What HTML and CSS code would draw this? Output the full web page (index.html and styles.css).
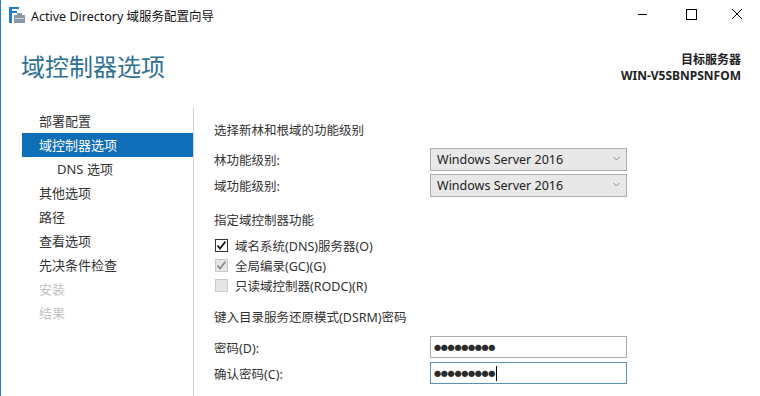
FILE: index.html
```html
<!DOCTYPE html>
<html lang="zh-CN">
<head>
  <meta charset="UTF-8" />
  <title>Active Directory 域服务配置向导</title>
  <link rel="stylesheet" href="styles.css">
</head>
<body>
  <div class="window">
    <div class="titlebar">
      <svg class="app-icon" width="16" height="16" viewBox="0 0 16 16">
        <rect x="0" y="0" width="3" height="16" fill="#1f7fc4"/>
        <rect x="3" y="0" width="7" height="2" fill="#1f7fc4"/>
        <rect x="3" y="4" width="5" height="2" fill="#1f7fc4"/>
        <rect x="5" y="8" width="11" height="8" fill="#8a98a6"/>
        <rect x="8" y="6" width="5" height="2" fill="#8a98a6"/>
        <rect x="6" y="11" width="9" height="1" fill="#c9d2da"/>
      </svg>
      <div class="title">Active Directory 域服务配置向导</div>
      <div class="controls">
        <svg width="46" height="30" viewBox="0 0 46 30"><line x1="16" y1="14.5" x2="25" y2="14.5" stroke="#000" stroke-width="1"/></svg>
        <svg width="46" height="30" viewBox="0 0 46 30"><rect x="18.5" y="9.5" width="10" height="10" fill="none" stroke="#000" stroke-width="1"/></svg>
        <svg width="46" height="30" viewBox="0 0 46 30"><path d="M18 9 L28 19 M28 9 L18 19" stroke="#000" stroke-width="1"/></svg>
      </div>
    </div>

    <div class="header">
      <h1>域控制器选项</h1>
      <div class="target">
        <div>目标服务器</div>
        <div>WIN-V5SBNPSNFOM</div>
      </div>
    </div>

    <div class="main">
      <ul class="nav">
        <li>部署配置</li>
        <li class="active">域控制器选项</li>
        <li class="sub">DNS 选项</li>
        <li>其他选项</li>
        <li>路径</li>
        <li>查看选项</li>
        <li>先决条件检查</li>
        <li class="disabled">安装</li>
        <li class="disabled">结果</li>
      </ul>

      <div class="content">
        <div class="section-title">选择新林和根域的功能级别</div>
        <div class="field first">
          <span class="label">林功能级别:</span>
          <div class="select">Windows Server 2016
            <svg class="chev" width="7" height="5" viewBox="0 0 7 5"><path d="M0.5 1 L3.5 4 L6.5 1" fill="none" stroke="#8a8a8a" stroke-width="1"/></svg>
          </div>
        </div>
        <div class="field">
          <span class="label">域功能级别:</span>
          <div class="select">Windows Server 2016
            <svg class="chev" width="7" height="5" viewBox="0 0 7 5"><path d="M0.5 1 L3.5 4 L6.5 1" fill="none" stroke="#8a8a8a" stroke-width="1"/></svg>
          </div>
        </div>

        <div class="section-title s2">指定域控制器功能</div>
        <div class="checks">
          <div class="check">
            <span class="box">
              <svg width="11" height="11" viewBox="0 0 11 11"><path d="M1.5 5.5 L4 8.5 L9.5 1.5" fill="none" stroke="#1a1a1a" stroke-width="1.8"/></svg>
            </span>域名系统(DNS)服务器(O)
          </div>
          <div class="check">
            <span class="box grey">
              <svg width="11" height="11" viewBox="0 0 11 11"><path d="M1.5 5.5 L4 8.5 L9.5 1.5" fill="none" stroke="#8c8c8c" stroke-width="1.8"/></svg>
            </span>全局编录(GC)(G)
          </div>
          <div class="check"><span class="box grey"></span>只读域控制器(RODC)(R)</div>
        </div>

        <div class="section-title s3">键入目录服务还原模式(DSRM)密码</div>
        <div class="field pw first-pw">
          <span class="label">密码(D):</span>
          <div class="input">●●●●●●●●●</div>
        </div>
        <div class="field pw">
          <span class="label">确认密码(C):</span>
          <div class="input focused">●●●●●●●●●<span class="caret"></span></div>
        </div>
      </div>
    </div>
  </div>
</body>
</html>
```

FILE: styles.css
```css
* {
  margin: 0;
  padding: 0;
  box-sizing: border-box;
}

html, body {
  width: 760px;
  height: 396px;
  overflow: hidden;
  background: #fff;
  font-family: "Noto Sans", "Noto Sans CJK SC", sans-serif;
  font-size: 12.5px;
  color: #333;
}

.window {
  height: 396px;
  border-left: 1px solid #2b7dbd;
  background: #fff;
}

.titlebar {
  height: 30px;
  display: flex;
  align-items: center;
}

.app-icon {
  margin-left: 8px;
  margin-right: 6px;
}

.title {
  font-size: 12.5px;
  color: #111;
  flex: 1;
}

.controls {
  display: flex;
}

.controls svg {
  display: block;
}

.header {
  height: 78px;
  display: flex;
  justify-content: space-between;
  padding: 21px 19px 0 20px;
}

h1 {
  font-size: 24px;
  font-weight: normal;
  color: #2e7191;
  line-height: 32px;
}

.target {
  text-align: right;
  font-size: 12px;
  font-weight: bold;
  line-height: 16px;
  color: #222;
  padding-top: 1px;
}

.main {
  display: flex;
  height: 288px;
}

.nav {
  list-style: none;
  width: 193px;
  border-right: 1px solid #d4d4d4;
  padding: 1px 0 0 21px;
}

.nav li {
  height: 24px;
  line-height: 24px;
  padding-left: 17px;
  font-size: 13px;
  color: #333;
}

.nav li.active {
  background: #0e6eb8;
  color: #fff;
}

.nav li.sub {
  padding-left: 35px;
}

.nav li.disabled {
  color: #c2c2c2;
}

.content {
  flex: 1;
  padding: 13px 0 0 20px;
}

.section-title {
  line-height: 20px;
  height: 20px;
}

.s2 {
  margin-top: 14px;
}

.s3 {
  margin-top: 13px;
}

.field {
  display: flex;
  align-items: center;
  margin-top: 3px;
}

.field.first {
  margin-top: 7px;
}

.label {
  width: 216px;
}

.select {
  position: relative;
  width: 197px;
  height: 23px;
  line-height: 21px;
  background: #e8e8e8;
  border: 1px solid #adadad;
  padding-left: 6px;
  font-size: 12.5px;
  color: #222;
}

.chev {
  position: absolute;
  right: 6px;
  top: 7px;
}

.checks {
  margin-top: 4px;
}

.check {
  height: 20px;
  display: flex;
  align-items: center;
}

.box {
  width: 13px;
  height: 13px;
  border: 1px solid #333;
  margin: 0 7px 0 1px;
  background: #fff;
  display: flex;
}

.box svg {
  display: block;
}

.box.grey {
  border-color: #c8c8c8;
  background: #e6e6e6;
}

.pw {
  margin-top: 4px;
}

.pw.first-pw {
  margin-top: 8px;
}

.input {
  width: 197px;
  height: 22px;
  border: 1px solid #adadad;
  padding-left: 3px;
  font-size: 7.1px;
  letter-spacing: -0.3px;
  line-height: 20px;
  color: #2a2a2a;
  display: flex;
  align-items: center;
}

.input.focused {
  border-color: #5d8fb2;
}

.caret {
  display: inline-block;
  width: 1px;
  height: 15px;
  background: #000;
  margin-left: 1px;
}
```
